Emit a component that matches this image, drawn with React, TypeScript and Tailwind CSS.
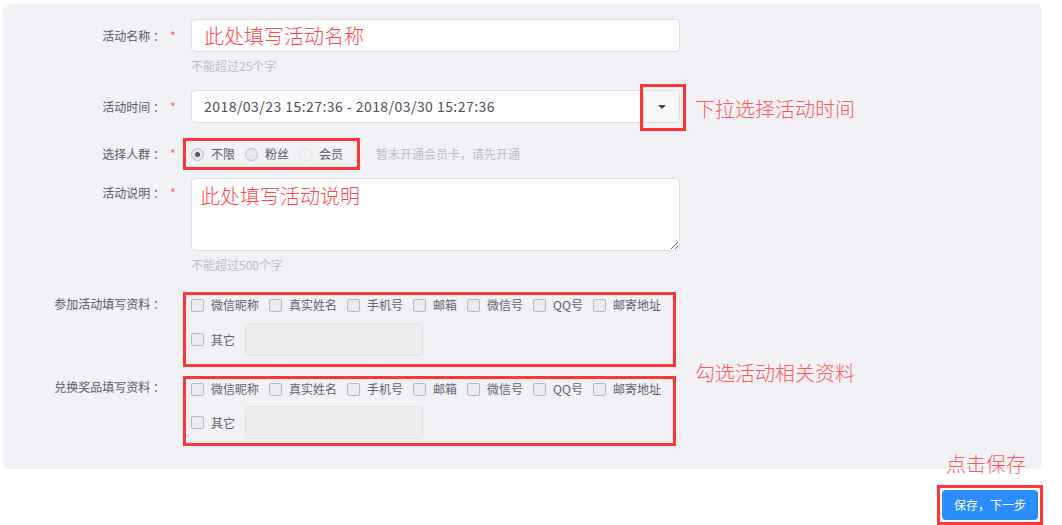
import React from 'react';

const font = { fontFamily: '"Noto Sans CJK SC", "Noto Sans", sans-serif' };

const Star = () => <span className="w-[28px] shrink-0 pl-[5px] text-[12px] text-[#f0605a]">*</span>;

const Label: React.FC<{ text: string; className?: string }> = ({ text, className }) => (
  <div className={`w-[162px] shrink-0 text-right text-[12px] text-[#555b66] ${className ?? ''}`}>{text}</div>
);

const Radio: React.FC<{ checked?: boolean; disabled?: boolean; label: string }> = ({ checked, disabled, label }) => (
  <label className="flex items-center gap-[7px]">
    <span
      className={`flex h-[13px] w-[13px] items-center justify-center rounded-full border ${
        disabled ? 'border-[#e2e2e2] bg-[#f2f2f2]' : 'border-[#b9bcc2] bg-[#e9e9ec]'
      }`}
    >
      {checked && <span className="h-[5px] w-[5px] rounded-full bg-[#555]" />}
    </span>
    <span className="text-[12px] text-[#555b66]">{label}</span>
  </label>
);

const Check: React.FC<{ label: string }> = ({ label }) => (
  <label className="flex items-center gap-[7px]">
    <span className="h-[13px] w-[13px] rounded-[2px] border border-[#b4b7bd] bg-[#ececee]" />
    <span className="text-[12px] text-[#5d636e]">{label}</span>
  </label>
);

const fields = ['微信昵称', '真实姓名', '手机号', '邮箱', '微信号', 'QQ号', '邮寄地址'];

const CheckGroup: React.FC<{ gap: string; pb: string; h: string }> = ({ gap, pb, h }) => (
  <div className={`-ml-[8px] w-[493px] ${h} border-[3px] border-[#ff3636] pl-[5px] ${pb}`}>
    <div className="flex h-[20px] items-center gap-[10px]">
      {fields.map((f) => (
        <Check key={f} label={f} />
      ))}
    </div>
    <div className={`flex items-center gap-[10px] ${gap}`}>
      <Check label="其它" />
      <div className="h-[33px] w-[178px] rounded-[4px] border border-[#e3e3e6] bg-[#eeeeef]" />
    </div>
  </div>
);

export default function App() {
  return (
    <div className="relative h-[525px] w-[1062px] overflow-hidden bg-white" style={font}>
      <div className="relative ml-[3px] mt-[4px] h-[465px] w-[1039px] rounded-[6px] bg-[#f1f1f6] pt-[15px]">
        {/* 活动名称 */}
        <div className="flex items-center">
          <Label text="活动名称 ：" />
          <Star />
          <div className="-ml-[2px] flex h-[33px] w-[489px] items-center rounded-[4px] border border-[#dddee2] bg-white pl-[12px] text-[20px] font-light text-[#ff4848]">
            此处填写活动名称
          </div>
        </div>
        <div className="ml-[188px] mt-[6px] text-[12px] leading-[16px] text-[#bcbec4]">不能超过25个字</div>

        {/* 活动时间 */}
        <div className="mt-[16px] flex items-center">
          <Label text="活动时间 ：" />
          <Star />
          <div className="relative -ml-[2px] flex h-[33px] w-[489px] rounded-[4px] border border-[#dddee2] bg-white">
            <div className="flex flex-1 items-center pl-[12px] text-[14px] tracking-[0.45px] text-[#4a505c]">
              2018/03/23 15:27:36 - 2018/03/30 15:27:36
            </div>
            <div className="flex w-[36px] items-center justify-center rounded-r-[4px] border-l border-[#e3e3e6] bg-[#f8f8f9]">
              <span className="h-0 w-0 border-x-[4px] border-t-[4px] border-x-transparent border-t-[#444]" />
            </div>
            <div className="absolute left-[448px] top-[-7px] h-[47px] w-[46px] border-[3px] border-[#ff3636]" />
            <div className="absolute left-[503px] top-[3px] whitespace-nowrap text-[20px] font-light text-[#ff5a5a]">
              下拉选择活动时间
            </div>
          </div>
        </div>

        {/* 选择人群 */}
        <div className="mt-[15px] flex items-center">
          <Label text="选择人群 ：" />
          <Star />
          <div className="-ml-[10px] flex h-[32px] w-[177px] items-center gap-[10px] border-[3px] border-[#ff3636] pl-[5px]">
            <Radio checked label="不限" />
            <Radio label="粉丝" />
            <Radio disabled label="会员" />
          </div>
          <div className="ml-[16px] text-[12px] text-[#bcbec4]">暂未开通会员卡，请先开通</div>
        </div>

        {/* 活动说明 */}
        <div className="mt-[8px] flex items-start">
          <Label text="活动说明 ：" className="pt-[6px]" />
          <span className="w-[28px] shrink-0 pl-[5px] pt-[6px] text-[12px] text-[#f0605a]">*</span>
          <textarea
            readOnly
            defaultValue="此处填写活动说明"
            className="-ml-[2px] h-[73px] w-[489px] rounded-[4px] border border-[#dddee2] bg-white px-[8px] py-[2px] text-[20px] font-light text-[#ff4848] outline-none"
          />
        </div>
        <div className="ml-[188px] mt-[6px] text-[12px] leading-[16px] text-[#bcbec4]">不能超过500个字</div>

        {/* 参加活动填写资料 */}
        <div className="relative mt-[19px] flex items-start">
          <Label text="参加活动填写资料 ：" className="pt-[2px] leading-[20px]" />
          <span className="w-[26px] shrink-0" />
          <CheckGroup gap="mt-[8px]" pb="pb-[8px]" h="h-[75px]" />
        </div>

        {/* 兑换奖品填写资料 */}
        <div className="relative mt-[9px] flex items-start">
          <Label text="兑换奖品填写资料 ：" className="pt-[1px] leading-[20px]" />
          <span className="w-[26px] shrink-0" />
          <CheckGroup gap="mt-[7px]" pb="pb-[4px]" h="h-[70px]" />
          <div className="absolute left-[692px] top-[-18px] whitespace-nowrap text-[20px] font-light text-[#ff5a5a]">
            勾选活动相关资料
          </div>
        </div>

        <div className="absolute left-[943px] top-[445px] whitespace-nowrap text-[20px] font-light text-[#ff5a5a]">
          点击保存
        </div>
      </div>

      {/* 保存按钮 */}
      <div className="mt-[16px] flex justify-end pr-[19px]">
        <div className="border-[3px] border-[#ff3636] p-[2px]">
          <button className="h-[30px] w-[96px] rounded-[4px] bg-[#2b8cfd] text-[12px] text-white">保存，下一步</button>
        </div>
      </div>
    </div>
  );
}
